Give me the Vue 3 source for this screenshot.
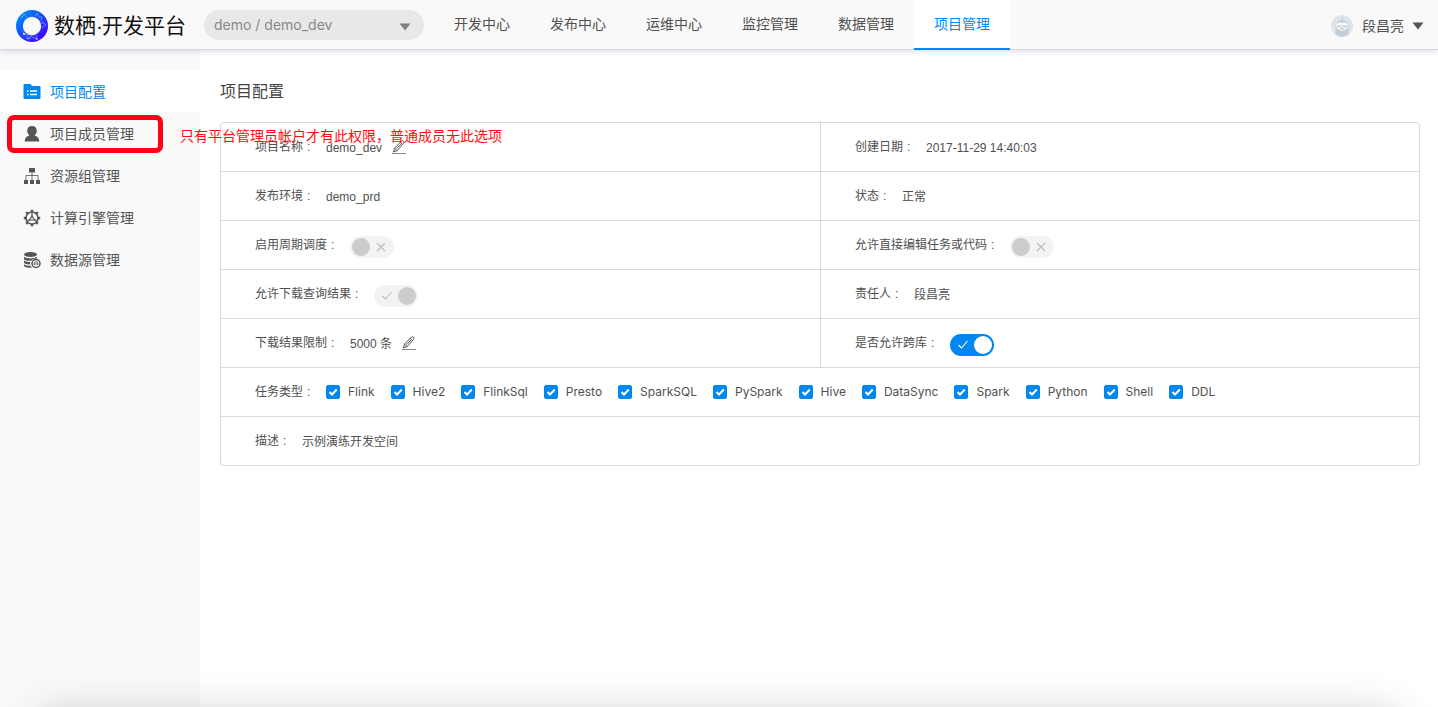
<script setup>
import { ref } from 'vue'

const workspace = ref('demo / demo_dev')
const sections = ['开发中心', '发布中心', '运维中心', '监控管理', '数据管理', '项目管理']
const menu = [
  { name: '项目配置', icon: 'folder' },
  { name: '项目成员管理', icon: 'user', note: '只有平台管理员帐户才有此权限，普通成员无此选项' },
  { name: '资源组管理', icon: 'tree' },
  { name: '计算引擎管理', icon: 'engine' },
  { name: '数据源管理', icon: 'database' }
]
const rows = [
  [{ label: '项目名称', value: 'demo_dev', edit: true }, { label: '创建日期', value: '2017-11-29 14:40:03' }],
  [{ label: '发布环境', value: 'demo_prd' }, { label: '状态', value: '正常' }],
  [{ label: '启用周期调度', id: 'schedule', on: false, disabled: true }, { label: '允许直接编辑任务或代码', id: 'direct', on: false, disabled: true }],
  [{ label: '允许下载查询结果', id: 'download', on: true, disabled: true }, { label: '责任人', value: '段昌亮' }],
  [{ label: '下载结果限制', value: '5000 条', edit: true }, { label: '是否允许跨库', id: 'cross', on: true, disabled: false }]
]
const taskTypes = ['Flink', 'Hive2', 'FlinkSql', 'Presto', 'SparkSQL', 'PySpark', 'Hive', 'DataSync', 'Spark', 'Python', 'Shell', 'DDL']
const checkedTypes = ref([...taskTypes])
</script>

<template>
  <div class="app">
    <header class="topbar">
      <a class="brand" href="#">
        <svg width="32" height="32" viewBox="0 0 32 32" aria-hidden="true">
          <defs>
            <linearGradient id="ring" x1="0" y1="0" x2="1" y2="1">
              <stop offset="0" stop-color="#0090ff" />
              <stop offset="0.5" stop-color="#1745ff" />
              <stop offset="1" stop-color="#4600ff" />
            </linearGradient>
          </defs>
          <circle cx="16" cy="16" r="12.6" fill="none" stroke="url(#ring)" stroke-width="6.8" />
          <g fill="none" stroke="#9fc4ff" stroke-width="0.6">
            <path d="M6 7l2-3 3 3M19 6l2-3 2 4 3 0-1 4M27 12l3 3-4 3M6 21l2 3 3 0 0 5 4-1M11 29l4-3 5 3 1-4" />
          </g>
          <g fill="#fff">
            <circle cx="8" cy="24" r="0.9" /><circle cx="21" cy="29" r="0.8" /><circle cx="6" cy="7" r="0.5" /><circle cx="26" cy="13" r="0.5" />
          </g>
        </svg>
        <span class="brand-name">数栖<span class="brand-dot">·</span>开发平台</span>
      </a>
      <div class="workspace">
        <select v-model="workspace" aria-label="项目">
          <option>demo / demo_dev</option>
        </select>
        <svg class="caret" width="12" height="8" viewBox="0 0 12 8" aria-hidden="true"><path d="M.5.5h11L6 7.5z" fill="currentColor" /></svg>
      </div>
      <nav class="sections">
        <a v-for="s in sections" :key="s" href="#" :class="{ active: s === '项目管理' }">{{ s }}</a>
      </nav>
      <button class="account" type="button">
        <svg width="24" height="24" viewBox="0 0 24 24" aria-hidden="true">
          <circle cx="12" cy="12" r="11" fill="#dfe5e8" />
          <path d="M12 6c-4.500 0-6.500 3-6.500 6v8.500a11 11 0 0 0 13 0V12c0-3-2-6-6.500-6z" fill="#c3ced8" />
          <path d="M12.500 6c-.5-1 .2-2.500.7-3" fill="none" stroke="#b6c4cf" stroke-width="1" />
          <path d="M6 11.500c0-2.500 3-3.500 6-2.500 3-1 6 0 6 2.500 0 2.500-3 5-6 5s-6-2.500-6-5z" fill="#f5f7f9" />
          <path d="M7 11.500c1 1.500 3 1.500 4 0M13 11.500c1 1.500 3 1.500 4 0M10.500 14.500h3" fill="none" stroke="#b4c0ca" stroke-width="1.300" />
        </svg>
        <span>段昌亮</span>
        <svg width="12" height="8" viewBox="0 0 12 8" aria-hidden="true"><path d="M.5.5h11L6 7.5z" fill="#555" /></svg>
      </button>
    </header>

    <div class="body">
      <aside class="sidebar">
        <a v-for="m in menu" :key="m.name" href="#" class="item" :class="{ active: m.icon === 'folder' }">
          <svg width="18" height="18" viewBox="0 0 18 18" aria-hidden="true">
            <template v-if="m.icon === 'folder'">
              <path d="M1.500 1h6l1.500 2h7.500q1 0 1 1v11q0 1-1 1h-15q-1 0-1-1V2q0-1 1-1z" fill="currentColor" />
              <path d="M4 8h1.500M7 8h7M4 11.500h1.500M7 11.500h7" stroke="#fff" stroke-width="1.500" />
            </template>
            <template v-else-if="m.icon === 'user'">
              <path d="M9 1c3 0 4.800 2 4.800 4.800 0 2-.9 3.700-2.300 4.600 3 .5 4.800 2.600 4.800 6.100H1.700c0-3.500 1.800-5.600 4.800-6.100C5.100 9.500 4.200 7.800 4.200 5.800 4.200 3 6 1 9 1z" fill="currentColor" />
            </template>
            <template v-else-if="m.icon === 'tree'">
              <path d="M6 1h6v4.500H6zM1 13h4v4H1zM7 13h4v4H7zM13 13h4v4h-4z" fill="currentColor" />
              <path d="M9 5v8M3 13V8.500h12V13" fill="none" stroke="currentColor" stroke-width=".8" />
            </template>
            <template v-else-if="m.icon === 'engine'">
              <circle cx="9" cy="9" r="6" fill="none" stroke="currentColor" stroke-width="1.600" />
              <path d="M9 .8v2.500M9 14.700v2.500M.8 9h2.500M14.700 9h2.500M3.200 3.200L5 5M13 13l1.800 1.800M14.800 3.200L13 5M5 13l-1.800 1.800" stroke="currentColor" stroke-width="2.400" />
              <path d="M9 4v4M7 10.500l-3 2M11 10.500l3 2" stroke="currentColor" stroke-width="1.200" />
              <path d="M9 7l2.500 4h-5z" fill="none" stroke="currentColor" stroke-width="1.200" />
            </template>
            <template v-else>
              <ellipse cx="7.500" cy="3.500" rx="6.500" ry="2.500" fill="currentColor" />
              <path d="M1 5.800c2 2 10 2.300 13 0V7.500c-3 0-5 1-6 2.300-3 .2-6-.3-7-1.600zM1 9.500c1.500 1.300 4 1.600 6.300 1.600-.3 1-.3 1.500-.2 2.300-3 .1-5.300-.5-6.100-1.600zM1 13.300c1.500 1.200 4 1.500 6.500 1.500.3.800.8 1.500 1.300 2-3.800.2-7.100-.5-7.800-1.800z" fill="currentColor" />
              <circle cx="13" cy="12.500" r="4" fill="none" stroke="currentColor" stroke-width="1.500" />
              <path d="M11.200 14v-1.500q0-1.800 1.800-1.800t1.800 1.800V14M11.200 13h3.600" fill="none" stroke="currentColor" stroke-width=".9" />
            </template>
          </svg>
          <span>{{ m.name }}</span>
          <span v-if="m.note" class="frame"></span>
          <span v-if="m.note" class="note">{{ m.note }}</span>
        </a>
      </aside>

      <main class="content">
        <h1>项目配置</h1>
        <table class="config">
          <tbody>
            <tr v-for="(row, i) in rows" :key="i">
              <td v-for="f in row" :key="f.label">
                <div class="field">
                  <component :is="f.id ? 'label' : 'span'" class="name" :for="f.id">{{ f.label }}<span class="colon">:</span></component>
                  <span v-if="f.id" class="switch">
                    <input :id="f.id" type="checkbox" role="switch" :checked="f.on" :disabled="f.disabled" />
                    <svg :class="f.on ? 'tick' : 'cross'" width="12" height="12" viewBox="0 0 12 12" aria-hidden="true">
                      <path :d="f.on ? 'M1.500 6l3 3L10.500 2' : 'M2 2l8 8M10 2l-8 8'" fill="none" stroke="currentColor" stroke-width="1.100" />
                    </svg>
                  </span>
                  <span v-else class="value">{{ f.value }}</span>
                  <button v-if="f.edit" class="edit" type="button" aria-label="编辑">
                    <svg width="14" height="14" viewBox="0 0 14 14" aria-hidden="true">
                      <path d="M0 13.500h14" stroke="#888" />
                      <path d="M1.500 12l1-3.800L9.300 1.200q1-1 2.200-.1 1.100 1 .2 2.200L5.200 10.600zM2.500 8.200l2.700 2.400M8.200 2.300l2.500 2.200M4.800 8.500l4.500-4.800" fill="none" stroke="#555" stroke-width="1" stroke-linejoin="round" />
                    </svg>
                  </button>
                </div>
              </td>
            </tr>
            <tr>
              <td colspan="2">
                <div class="field">
                  <span class="name">任务类型<span class="colon">:</span></span>
                  <div class="types">
                    <label v-for="t in taskTypes" :key="t" class="type">
                      <span class="box">
                        <input v-model="checkedTypes" type="checkbox" :value="t" />
                        <svg width="14" height="14" viewBox="0 0 14 14" aria-hidden="true"><path d="M3.500 7l2.500 2.500L10.800 4.500" fill="none" stroke="#fff" stroke-width="2" /></svg>
                      </span>
                      <span>{{ t }}</span>
                    </label>
                  </div>
                </div>
              </td>
            </tr>
            <tr>
              <td colspan="2">
                <div class="field">
                  <span class="name">描述<span class="colon">:</span></span>
                  <span class="value">示例演练开发空间</span>
                </div>
              </td>
            </tr>
          </tbody>
        </table>
      </main>
    </div>
    <div class="bottom-shade"></div>
  </div>
</template>

<style>
body {
  margin: 0;
  overflow: hidden;
}
</style>

<style scoped>
* {
  box-sizing: border-box;
}
.app {
  display: flex;
  flex-direction: column;
  min-height: 100vh;
  background: #fff;
  color: #505050;
  font: 14px/20px "Liberation Sans", "Noto Sans CJK SC", sans-serif;
}
a {
  color: inherit;
  text-decoration: none;
}
button {
  padding: 0;
  border: 0;
  background: none;
  color: inherit;
  font: inherit;
}
svg {
  flex: none;
  display: block;
}
.topbar {
  position: relative;
  z-index: 1;
  display: flex;
  height: 50px;
  padding-left: 16px;
  background: #f9f9f9;
  border-bottom: 1px solid #d8d8de;
  box-shadow: 0 1px 6px rgba(60, 60, 160, 0.2);
}
.brand {
  display: flex;
  align-items: center;
  gap: 6px;
  width: 188px;
  padding-top: 2px;
  color: #111;
}
.brand-name {
  display: flex;
  font-size: 21px;
  line-height: 30px;
  white-space: nowrap;
}
.brand-dot {
  width: 6px;
  text-align: center;
}
.workspace {
  position: relative;
  align-self: center;
  width: 220px;
  margin-right: 10px;
}
.workspace select {
  display: block;
  width: 100%;
  height: 30px;
  padding: 0 30px 0 10px;
  appearance: none;
  border: 0;
  border-radius: 15px;
  background: #e8e8e8;
  color: #888;
  font: 14px Inter, sans-serif;
}
.caret {
  position: absolute;
  top: 13px;
  right: 13px;
  color: #808080;
  pointer-events: none;
}
.sections {
  display: flex;
  height: 50px;
}
.sections a {
  width: 96px;
  padding-top: 14px;
  text-align: center;
  border-bottom: 2px solid transparent;
}
.sections .active {
  background: #fff;
  color: #0087f0;
  border-bottom-color: #0087f0;
}
.account {
  display: flex;
  align-items: center;
  gap: 8px;
  margin-left: auto;
  padding: 2px 14px 0 0;
}
.body {
  display: flex;
  flex: 1;
}
.sidebar {
  flex: none;
  width: 200px;
  padding-top: 20px;
  background: #f9f9f9;
}
.item {
  position: relative;
  display: flex;
  align-items: center;
  gap: 9px;
  height: 42px;
  padding: 2px 0 0 23px;
  color: #555;
}
.item.active {
  background: #fff;
  color: #0087f0;
}
.frame {
  position: absolute;
  top: 3px;
  left: 7px;
  width: 156px;
  height: 38px;
  border: 5px solid #ff0019;
  border-radius: 7px;
}
.note {
  position: absolute;
  top: 14px;
  left: 180px;
  color: #ff0d0d;
  white-space: nowrap;
}
.content {
  flex: 1;
  min-width: 0;
  padding: 30px 18px 0 20px;
}
h1 {
  margin: 0 0 18px;
  font-size: 16px;
  line-height: 24px;
  font-weight: normal;
  color: #444;
}
.config {
  width: 100%;
  table-layout: fixed;
  border: 1px solid #d9d9d9;
  border-bottom: 0;
  border-radius: 4px;
  border-spacing: 0;
  font-size: 12px;
}
.config td {
  height: 49px;
  padding: 0 0 0 34px;
  border-bottom: 1px solid #d9d9d9;
}
.config tr:last-child td {
  border-radius: 0 0 4px 4px;
}
.config td + td {
  border-left: 1px solid #d9d9d9;
}
.field {
  display: flex;
  align-items: center;
  height: 48px;
}
.colon {
  display: inline-block;
  width: 23px;
  padding-left: 4px;
}
.value {
  padding-top: 2px;
}
.edit {
  margin-left: 10px;
}
.switch {
  position: relative;
  margin-top: 4px;
}
.switch input {
  display: block;
  width: 44px;
  height: 22px;
  margin: 0;
  padding: 2px;
  appearance: none;
  border-radius: 11px;
  background: #0087f0;
}
.switch input::before {
  content: "";
  display: block;
  width: 18px;
  height: 18px;
  border-radius: 9px;
  background: #fff;
}
.switch input:checked::before {
  margin-left: auto;
}
.switch input:disabled {
  background: #f3f3f3;
}
.switch input:disabled::before {
  background: #ccc;
}
.switch svg {
  position: absolute;
  top: 5px;
  color: #fff;
  pointer-events: none;
}
.switch input:disabled + svg {
  color: #bbb;
}
.tick {
  left: 7px;
}
.cross {
  right: 7px;
}
.types {
  display: flex;
  gap: 16px;
}
.type {
  display: flex;
  align-items: center;
  gap: 8px;
  font-family: Inter, sans-serif;
}
.box {
  position: relative;
}
.box input {
  display: block;
  width: 14px;
  height: 14px;
  margin: 0;
  appearance: none;
  border: 1px solid #0087f0;
  border-radius: 2px;
}
.box input:checked {
  background: #0087f0;
}
.box svg {
  position: absolute;
  top: 0;
  left: 0;
  pointer-events: none;
}
.bottom-shade {
  position: fixed;
  z-index: 2;
  right: 40px;
  bottom: -40px;
  left: 40px;
  height: 34px;
  box-shadow: 0 0 40px rgba(0, 0, 0, 0.2);
  pointer-events: none;
}
</style>
